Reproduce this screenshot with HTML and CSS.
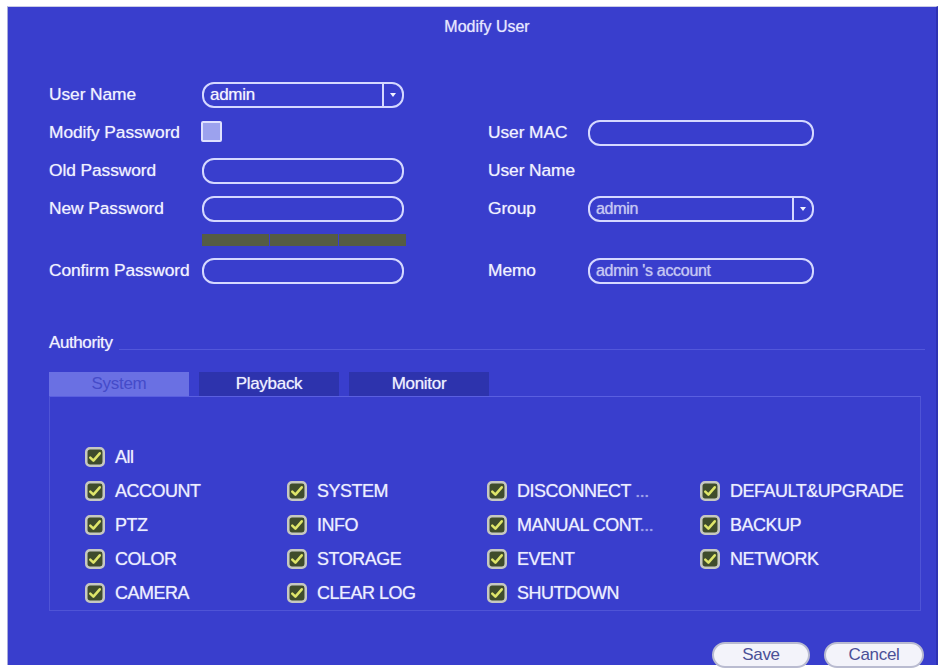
FILE: index.html
```html
<!DOCTYPE html>
<html lang="en">
<head>
<meta charset="utf-8">
<title>Modify User</title>
<link rel="stylesheet" href="styles.css">
</head>
<body>
<div class="dialog">
  <div class="title">Modify User</div>

  <div class="form">
    <div class="label r1 c1">User Name</div>
    <div class="select r1 c2"><span class="value">admin</span><span class="arrow"><svg width="8" height="6" viewBox="0 0 8 6"><path d="M1 1h6L4 5z" fill="#f2f2ff"/></svg></span></div>

    <div class="label r2 c1">Modify Password</div>
    <div class="r2 c2 cell-start"><span class="plain-box"></span></div>
    <div class="label r2 c4">User MAC</div>
    <div class="field r2 c5"></div>

    <div class="label r3 c1">Old Password</div>
    <div class="field r3 c2"></div>
    <div class="label r3 c4">User Name</div>

    <div class="label r4 c1">New Password</div>
    <div class="field r4 c2"></div>
    <div class="label r4 c4">Group</div>
    <div class="select r4 c5 dim"><span class="value">admin</span><span class="arrow"><svg width="8" height="6" viewBox="0 0 8 6"><path d="M1 1h6L4 5z" fill="#f2f2ff"/></svg></span></div>

    <div class="strength r5 c2"><span></span><span></span><span></span></div>

    <div class="label r6 c1">Confirm Password</div>
    <div class="field r6 c2"></div>
    <div class="label r6 c4">Memo</div>
    <div class="field r6 c5 dim"><span class="value">admin 's account</span></div>
  </div>

  <div class="authority">
    <span class="auth-label">Authority</span>
    <span class="auth-line"></span>
  </div>

  <div class="tabs">
    <div class="tab active">System</div>
    <div class="tab">Playback</div>
    <div class="tab">Monitor</div>
  </div>

  <div class="perm-box">
    <div class="perms">
      <div class="perm all"><svg class="cb" viewBox="0 0 19 19"><rect x="1.2" y="1.2" width="16.6" height="16.6" rx="3.5"/><path d="M5 10l3 3 6-7"/></svg><span>All</span></div>

      <div class="perm"><svg class="cb" viewBox="0 0 19 19"><rect x="1.2" y="1.2" width="16.6" height="16.6" rx="3.5"/><path d="M5 10l3 3 6-7"/></svg><span>ACCOUNT</span></div>
      <div class="perm"><svg class="cb" viewBox="0 0 19 19"><rect x="1.2" y="1.2" width="16.6" height="16.6" rx="3.5"/><path d="M5 10l3 3 6-7"/></svg><span>SYSTEM</span></div>
      <div class="perm"><svg class="cb" viewBox="0 0 19 19"><rect x="1.2" y="1.2" width="16.6" height="16.6" rx="3.5"/><path d="M5 10l3 3 6-7"/></svg><span>DISCONNECT <i>...</i></span></div>
      <div class="perm"><svg class="cb" viewBox="0 0 19 19"><rect x="1.2" y="1.2" width="16.6" height="16.6" rx="3.5"/><path d="M5 10l3 3 6-7"/></svg><span>DEFAULT&amp;UPGRADE</span></div>

      <div class="perm"><svg class="cb" viewBox="0 0 19 19"><rect x="1.2" y="1.2" width="16.6" height="16.6" rx="3.5"/><path d="M5 10l3 3 6-7"/></svg><span>PTZ</span></div>
      <div class="perm"><svg class="cb" viewBox="0 0 19 19"><rect x="1.2" y="1.2" width="16.6" height="16.6" rx="3.5"/><path d="M5 10l3 3 6-7"/></svg><span>INFO</span></div>
      <div class="perm"><svg class="cb" viewBox="0 0 19 19"><rect x="1.2" y="1.2" width="16.6" height="16.6" rx="3.5"/><path d="M5 10l3 3 6-7"/></svg><span>MANUAL CONT<i>...</i></span></div>
      <div class="perm"><svg class="cb" viewBox="0 0 19 19"><rect x="1.2" y="1.2" width="16.6" height="16.6" rx="3.5"/><path d="M5 10l3 3 6-7"/></svg><span>BACKUP</span></div>

      <div class="perm"><svg class="cb" viewBox="0 0 19 19"><rect x="1.2" y="1.2" width="16.6" height="16.6" rx="3.5"/><path d="M5 10l3 3 6-7"/></svg><span>COLOR</span></div>
      <div class="perm"><svg class="cb" viewBox="0 0 19 19"><rect x="1.2" y="1.2" width="16.6" height="16.6" rx="3.5"/><path d="M5 10l3 3 6-7"/></svg><span>STORAGE</span></div>
      <div class="perm"><svg class="cb" viewBox="0 0 19 19"><rect x="1.2" y="1.2" width="16.6" height="16.6" rx="3.5"/><path d="M5 10l3 3 6-7"/></svg><span>EVENT</span></div>
      <div class="perm"><svg class="cb" viewBox="0 0 19 19"><rect x="1.2" y="1.2" width="16.6" height="16.6" rx="3.5"/><path d="M5 10l3 3 6-7"/></svg><span>NETWORK</span></div>

      <div class="perm"><svg class="cb" viewBox="0 0 19 19"><rect x="1.2" y="1.2" width="16.6" height="16.6" rx="3.5"/><path d="M5 10l3 3 6-7"/></svg><span>CAMERA</span></div>
      <div class="perm"><svg class="cb" viewBox="0 0 19 19"><rect x="1.2" y="1.2" width="16.6" height="16.6" rx="3.5"/><path d="M5 10l3 3 6-7"/></svg><span>CLEAR LOG</span></div>
      <div class="perm"><svg class="cb" viewBox="0 0 19 19"><rect x="1.2" y="1.2" width="16.6" height="16.6" rx="3.5"/><path d="M5 10l3 3 6-7"/></svg><span>SHUTDOWN</span></div>
    </div>
  </div>

  <div class="footer">
    <button class="btn">Save</button>
    <button class="btn cancel">Cancel</button>
  </div>
</div>
</body>
</html>
```

FILE: styles.css
```css
html, body {
  margin: 0;
  padding: 0;
  background: #ffffff;
  height: 668px;
  overflow: hidden;
}

body {
  font-family: "Liberation Sans", Arial, sans-serif;
  color: #f0f1ff;
}

.dialog {
  margin: 6px 0 0 7px;
  width: 931px;
  height: 659px;
  box-sizing: border-box;
  padding: 0 15px 0 41px;
  background: #393ecd;
  border-left: 1px solid #a9acd9;
  border-top: 1px solid #c9cbe6;
  border-right: 2px solid #2e32b4;
  text-shadow: 0 0 1px rgba(255, 255, 255, 0.6);
}

.title {
  padding-top: 10px;
  padding-left: 30px;
  line-height: 20px;
  height: 20px;
  font-size: 16px;
  text-align: center;
  margin-left: -41px;
  margin-right: -15px;
  color: #e6e7ff;
}

/* ---------- form ---------- */
.form {
  margin-top: 45px;
  display: grid;
  grid-template-columns: 153px 202px 84px 100px 226px;
  grid-template-rows: 26px 26px 26px 26px 12px 26px;
  row-gap: 12px;
}

.r1 { grid-row: 1; }
.r2 { grid-row: 2; }
.r3 { grid-row: 3; }
.r4 { grid-row: 4; }
.r5 { grid-row: 5; }
.r6 { grid-row: 6; }
.c1 { grid-column: 1; }
.c2 { grid-column: 2; }
.c4 { grid-column: 4; }
.c5 { grid-column: 5; }

.label {
  font-size: 17.4px;
  letter-spacing: -0.1px;
  line-height: 20px;
  align-self: center;
  margin-top: -3px;
  white-space: nowrap;
}

.cell-start {
  display: flex;
  align-items: center;
}

.plain-box {
  width: 17px;
  height: 17px;
  margin-top: -4px;
  margin-left: -1px;
  background: #9ca2ee;
  border: 2px solid #dfe1ff;
  border-radius: 2px;
}

.field,
.select {
  box-sizing: border-box;
  height: 26px;
  border: 2px solid #d5d8ff;
  border-radius: 12px;
  display: flex;
  align-items: center;
  overflow: hidden;
}

.value {
  flex: 1;
  padding-left: 6px;
  font-size: 17px;
  letter-spacing: -0.3px;
  line-height: 20px;
  color: #f4f4ff;
}

.dim .value {
  color: #c3c6f3;
  font-size: 16px;
}

.select .arrow {
  width: 18px;
  align-self: stretch;
  border-left: 2px solid #d5d8ff;
  display: flex;
  align-items: center;
  justify-content: center;
}

.strength {
  display: flex;
  gap: 1px;
  width: 204px;
}

.strength span {
  flex: 1;
  background: #555c45;
}

/* ---------- authority ---------- */
.authority {
  margin-top: 49px;
  display: flex;
  align-items: flex-end;
  height: 20px;
}

.auth-label {
  font-size: 17px;
  letter-spacing: -0.4px;
  line-height: 20px;
}

.auth-line {
  flex: 1;
  height: 0;
  border-bottom: 1px solid #5257da;
  margin: 0 -4px 3px 6px;
}

.tabs {
  margin-top: 19px;
  display: flex;
  gap: 10px;
}

.tab {
  width: 140px;
  height: 24px;
  line-height: 24px;
  text-align: center;
  font-size: 17px;
  letter-spacing: -0.3px;
  background: #2d33ad;
  color: #eef0ff;
}

.tab.active {
  background: #6a70e3;
  color: #454bc9;
  text-shadow: none;
}

.perm-box {
  border: 1px solid #4f54d6;
  border-top-color: #5a5fe0;
}

.perms {
  padding: 43px 0 0 36px;
  display: grid;
  grid-template-columns: 202px 200px 213px 1fr;
  grid-auto-rows: 34px;
}

.perm {
  display: flex;
  align-items: center;
  gap: 11px;
  font-size: 18px;
  letter-spacing: -0.5px;
  white-space: nowrap;
  color: #eceeff;
}

.perm.all {
  grid-column: 1 / -1;
}

.perm i {
  font-style: normal;
  color: #9ea2ea;
}

.cb {
  width: 20px;
  height: 20px;
  flex: none;
  margin-left: -1px;
  margin-right: -1px;
}

.cb rect {
  fill: #3f4c2c;
  stroke: #c6c8c0;
  stroke-width: 2.4;
}

.cb path {
  fill: none;
  stroke: #dfe66a;
  stroke-width: 2.4;
  stroke-linecap: round;
  stroke-linejoin: round;
}

/* ---------- footer ---------- */
.footer {
  margin-top: 31px;
  display: flex;
  justify-content: flex-end;
  gap: 14px;
  margin-right: -3px;
}

.btn {
  width: 98px;
  height: 26px;
  border: 2px solid #b9bbd0;
  border-radius: 13px;
  background: #f3f3fa;
  color: #4b5097;
  font-family: "Liberation Sans", Arial, sans-serif;
  font-size: 17px;
  letter-spacing: -0.3px;
  padding: 0;
  line-height: 20px;
  text-shadow: none;
}

.btn.cancel {
  width: 100px;
}
```
